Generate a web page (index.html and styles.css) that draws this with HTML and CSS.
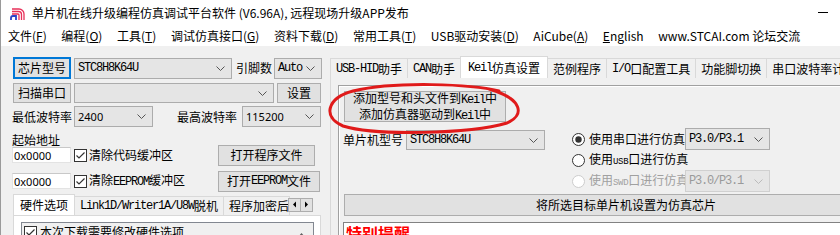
FILE: index.html
```html
<!DOCTYPE html>
<html>
<head>
<meta charset="utf-8">
<link rel="stylesheet" href="styles.css">
</head>
<body>
<div class="win">
  <div class="title">
    <svg class="logo" width="16" height="16" viewBox="0 0 16 16">
      <path d="M2 4 H9 A5 5 0 0 1 14 9 V15" fill="none" stroke="#e8305a" stroke-width="1.3"/>
      <path d="M2 6.5 H8.5 A3 3 0 0 1 11.5 9.5 V15" fill="none" stroke="#e8305a" stroke-width="1.3"/>
      <path d="M2 9 H8 A1 1 0 0 1 9 10 V15" fill="none" stroke="#e8305a" stroke-width="1.3"/>
      <path d="M1 15 V13 A2 2 0 0 1 3 11 H6 V15" fill="none" stroke="#2a44c8" stroke-width="1.8"/>
    </svg>
    <span class="ttl">单片机在线升级编程仿真调试平台软件 (V6.96A), 远程现场升级APP发布</span>
    <span class="min"></span>
  </div>
  <div class="menu">
    <span>文件(<u>F</u>)</span>
    <span>编程(<u>O</u>)</span>
    <span>工具(<u>T</u>)</span>
    <span>调试仿真接口(<u>G</u>)</span>
    <span>资料下载(<u>D</u>)</span>
    <span>常用工具(<u>T</u>)</span>
    <span>USB驱动安装(<u>D</u>)</span>
    <span>AiCube(<u>A</u>)</span>
    <span><u>E</u>nglish</span>
    <span>www.STCAI.com 论坛交流</span>
  </div>
  <div class="main">
    <div class="left">
      <div class="row r1">
        <div class="btn focus w58 h22">芯片型号</div>
        <div class="combo w158 h21 ml3"><span class="m">STC8H8K64U</span><svg class="arr" width="9" height="5" viewBox="0 0 9 5"><path d="M0.5 0.5 L4.5 4.5 L8.5 0.5" fill="none" stroke="#555" stroke-width="1"/></svg></div>
        <span class="lbl ml4">引脚数</span>
        <div class="combo w48 h21 ml2"><span class="m">Auto</span><svg class="arr" width="9" height="5" viewBox="0 0 9 5"><path d="M0.5 0.5 L4.5 4.5 L8.5 0.5" fill="none" stroke="#555" stroke-width="1"/></svg></div>
      </div>
      <div class="row r2">
        <div class="btn w58 h20">扫描串口</div>
        <div class="combo w200 h20 ml3"><svg class="arr" width="9" height="5" viewBox="0 0 9 5"><path d="M0.5 0.5 L4.5 4.5 L8.5 0.5" fill="none" stroke="#555" stroke-width="1"/></svg></div>
        <div class="btn w44 h20 ml3">设置</div>
      </div>
      <div class="row r3">
        <span class="lbl w62">最低波特率</span>
        <div class="combo w79 h21"><span class="s">2400</span><svg class="arr" width="9" height="5" viewBox="0 0 9 5"><path d="M0.5 0.5 L4.5 4.5 L8.5 0.5" fill="none" stroke="#555" stroke-width="1"/></svg></div>
        <span class="lbl ml24 w65">最高波特率</span>
        <div class="combo w79 h21"><span class="s">115200</span><svg class="arr" width="9" height="5" viewBox="0 0 9 5"><path d="M0.5 0.5 L4.5 4.5 L8.5 0.5" fill="none" stroke="#555" stroke-width="1"/></svg></div>
      </div>
      <div class="lbl r4">起始地址</div>
      <div class="row r5">
        <div class="field w59"><span class="s">0x0000</span></div>
        <span class="chk ml3"><svg width="13" height="13" viewBox="0 0 13 13"><rect x="0.5" y="0.5" width="12" height="12" fill="#fff" stroke="#333"/><path d="M2.5 6.5 L5 9 L10.5 3.5" fill="none" stroke="#333" stroke-width="1.2"/></svg></span>
        <span class="lbl ml2">清除代码缓冲区</span>
        <div class="btn w97 h21 pushr">打开程序文件</div>
      </div>
      <div class="row r6">
        <div class="field w59"><span class="s">0x0000</span></div>
        <span class="chk ml3"><svg width="13" height="13" viewBox="0 0 13 13"><rect x="0.5" y="0.5" width="12" height="12" fill="#fff" stroke="#333"/><path d="M2.5 6.5 L5 9 L10.5 3.5" fill="none" stroke="#333" stroke-width="1.2"/></svg></span>
        <span class="lbl ml2">清除<span class="m">EEPROM</span>缓冲区</span>
        <div class="btn w102 h21 pushr">打开<span class="m">EEPROM</span>文件</div>
      </div>
      <div class="ltabs">
        <div class="tab sel">硬件选项</div>
        <div class="tab"><span class="m">Link1D/Writer1A/U8W</span>脱机</div>
        <div class="tab clip">程序加密后</div>
        <div class="spin">
          <span class="sb"><svg width="5" height="7" viewBox="0 0 5 7"><path d="M4 0.5 L1 3.5 L4 6.5 Z" fill="#000"/></svg></span>
          <span class="sb"><svg width="5" height="7" viewBox="0 0 5 7"><path d="M1 0.5 L4 3.5 L1 6.5 Z" fill="#000"/></svg></span>
        </div>
      </div>
      <div class="lpanel">
        <div class="lbox">
          <span class="chk"><svg width="13" height="13" viewBox="0 0 13 13"><rect x="0.5" y="0.5" width="12" height="12" fill="#fff" stroke="#333"/><path d="M2.5 6.5 L5 9 L10.5 3.5" fill="none" stroke="#333" stroke-width="1.2"/></svg></span>
          <span class="lbl ml3">本次下载需要修改硬件选项</span>
          <span class="up"><svg width="9" height="6" viewBox="0 0 9 6"><path d="M0.5 5.5 L4.5 1 L8.5 5.5 Z" fill="#606060"/></svg></span>
        </div>
      </div>
    </div>
    <div class="right">
      <div class="rtabs">
        <div class="tab"><span class="m">USB-HID</span>助手</div>
        <div class="tab"><span class="m">CAN</span>助手</div>
        <div class="tab sel"><span class="m">Keil</span>仿真设置</div>
        <div class="tab">范例程序</div>
        <div class="tab"><span class="m">I/O</span>口配置工具</div>
        <div class="tab">功能脚切换</div>
        <div class="tab">串口波特率计算器</div>
      </div>
      <div class="rpanel">
        <div class="frame">
          <div class="btn kbtn"><span>添加型号和头文件到<span class="m">Keil</span>中</span><span>添加仿真器驱动到<span class="m">Keil</span>中</span></div>
          <div class="krow">
            <div class="kleft">
              <span class="lbl">单片机型号</span>
              <div class="combo w139 h20 ml3"><span class="m">STC8H8K64U</span><svg class="arr" width="9" height="5" viewBox="0 0 9 5"><path d="M0.5 0.5 L4.5 4.5 L8.5 0.5" fill="none" stroke="#555" stroke-width="1"/></svg></div>
            </div>
            <div class="radios">
              <div class="rrow">
                <span class="rad"><svg width="13" height="13" viewBox="0 0 13 13"><circle cx="6.5" cy="6.5" r="6" fill="#fff" stroke="#333"/><circle cx="6.5" cy="6.5" r="3.2" fill="#333"/></svg></span>
                <span class="lbl ml4 w96">使用串口进行仿真</span>
                <div class="combo w85 h22"><span class="m">P3.0/P3.1</span><svg class="arr" width="9" height="5" viewBox="0 0 9 5"><path d="M0.5 0.5 L4.5 4.5 L8.5 0.5" fill="none" stroke="#555" stroke-width="1"/></svg></div>
              </div>
              <div class="rrow h20">
                <span class="rad"><svg width="13" height="13" viewBox="0 0 13 13"><circle cx="6.5" cy="6.5" r="6" fill="#fff" stroke="#333"/></svg></span>
                <span class="lbl ml4">使用<span class="ms">USB</span>口进行仿真</span>
              </div>
              <div class="rrow dis">
                <span class="rad"><svg width="13" height="13" viewBox="0 0 13 13"><circle cx="6.5" cy="6.5" r="6" fill="#fff" stroke="#ccc"/></svg></span>
                <span class="lbl ml4 w96">使用<span class="ms">SWD</span>口进行仿真</span>
                <div class="combo dcombo w85 h22"><span class="m">P3.0/P3.1</span><svg class="arr" width="9" height="5" viewBox="0 0 9 5"><path d="M0.5 0.5 L4.5 4.5 L8.5 0.5" fill="none" stroke="#bbb" stroke-width="1"/></svg></div>
              </div>
            </div>
          </div>
          <div class="btn bigbtn">将所选目标单片机设置为仿真芯片</div>
          <div class="note"><span class="red">特别提醒</span></div>
        </div>
      </div>
    </div>
  </div>
  <svg class="ring" width="840" height="235" viewBox="0 0 840 235">
    <path d="M498 91 C470 84 395 81 352 91 C326 98 321 117 342 126 C375 136 468 134 506 123 C524 115 522 99 488 89" fill="none" stroke="#e01a1a" stroke-width="3" stroke-linecap="round"/>
  </svg>
</div>
</body>
</html>
```
FILE: styles.css
```css
html, body { margin: 0; padding: 0; }
body { width: 840px; height: 235px; overflow: hidden; background: #f0f0f0; font-family: "Noto Sans CJK SC", sans-serif; font-size: 12px; color: #000; }
.win { position: relative; width: 840px; height: 235px; overflow: hidden; border-left: 1px solid #9a9a9a; box-sizing: border-box; }
.title { height: 25px; background: #fff; display: flex; align-items: center; }
.logo { margin-left: 9px; }
.ttl { margin-left: 6px; line-height: 14px; }
.min { margin-left: auto; margin-right: 12px; width: 10px; height: 1px; background: #000; }
.menu { height: 21px; background: #fff; display: flex; align-items: center; gap: 14.6px; padding-left: 7px; line-height: 14px; }
.main { display: flex; height: 189px; }
.left { width: 327px; flex: none; padding: 11px 0 0 11px; box-sizing: border-box; }
.row { display: flex; align-items: center; }
.r2 { margin-top: 4px; }
.r3 { margin-top: 3px; }
.r4 { margin-top: 6px; height: 14px; line-height: 14px; }
.r5 { margin-top: -3px; height: 22px; }
.r6 { margin-top: 4px; height: 22px; }
.lbl { line-height: 14px; white-space: nowrap; }
.btn { box-sizing: border-box; background: #e1e1e1; border: 1px solid #adadad; display: flex; align-items: center; justify-content: center; line-height: 14px; white-space: nowrap; }
.focus { border: 2px solid #0078d7; }
.combo { box-sizing: border-box; background: #e5e5e5; border: 1px solid #acacac; display: flex; align-items: center; padding-left: 3px; line-height: 14px; white-space: nowrap; }
.arr { margin-left: auto; margin-right: 6px; flex: none; }
.field { box-sizing: border-box; height: 16px; background: #fff; border: 1px solid #e3e3e3; border-top-color: #c8c8c8; display: flex; align-items: center; padding-left: 1px; }
.chk, .rad { display: flex; flex: none; }
.m { font-family: "Liberation Mono", monospace; font-size: 12px; letter-spacing: -1.2px; }
.ms { font-family: "Liberation Mono", monospace; font-size: 9px; letter-spacing: -0.3px; }
.s { font-family: "Noto Sans", sans-serif; font-size: 11px; }
.pushr { margin-left: auto; }
.r5 .btn { margin-right: 13px; }
.r6 .btn { margin-right: 8px; }
.w44 { width: 44px; } .w48 { width: 48px; } .w58 { width: 58px; } .w59 { width: 59px; } .w62 { width: 62px; } .w65 { width: 65px; }
.w79 { width: 79px; } .w85 { width: 85px; } .w96 { width: 96px; } .w97 { width: 97px; } .w102 { width: 102px; } .w139 { width: 139px; } .w158 { width: 158px; } .w200 { width: 200px; }
.h20 { height: 20px; } .h21 { height: 21px; } .h22 { height: 22px; }
.ml2 { margin-left: 2px; } .ml3 { margin-left: 3px; } .ml4 { margin-left: 4px; } .ml24 { margin-left: 24px; }
.r1 .btn { margin-left: 1px; }
.r2 .btn:first-child { margin-left: 1px; }
.ltabs { display: flex; align-items: flex-end; height: 21px; margin-top: 2px; margin-left: 1px; position: relative; z-index: 1; }
.tab { box-sizing: border-box; height: 19px; padding: 0 5px; border: 1px solid #d9d9d9; border-bottom: none; margin-right: -1px; background: #f0f0f0; display: flex; align-items: center; line-height: 14px; white-space: nowrap; }
.tab.sel { height: 21px; background: #fff; padding: 0 6px; }
.tab.clip { width: 67px; overflow: hidden; }
.spin { display: flex; align-self: center; }
.sb { box-sizing: border-box; width: 13px; height: 14px; border: 1px solid #adadad; background: #e1e1e1; display: flex; align-items: center; justify-content: center; margin-left: -1px; }
.lpanel { margin-left: 1px; width: 308px; height: 30px; box-sizing: border-box; border: 1px solid #d9d9d9; background: #fff; padding: 6px 0 0 7px; }
.lbox { box-sizing: border-box; height: 30px; width: 293px; border: 1px solid #828790; background: #f0f0f0; display: flex; align-items: flex-start; padding: 3px 0 0 2px; }
.lbox .lbl { margin-top: -1px; }
.up { margin-left: auto; margin-right: 2px; width: 20px; display: flex; justify-content: center; padding-top: 6px; }
.right { flex: 1; padding-top: 10px; min-width: 0; }
.rtabs { display: flex; align-items: flex-end; height: 22px; margin-left: 2px; position: relative; z-index: 1; }
.rtabs .tab { height: 20px; }
.rtabs .tab.sel { height: 22px; padding: 0 7px; }
.rpanel { border-top: 1px solid #d9d9d9; border-left: 1px solid #d9d9d9; margin-left: 2px; margin-top: -1px; height: 160px; padding: 7px 0 0 7px; }
.frame { border-top: 1px solid #a0a0a0; border-left: 1px solid #a0a0a0; height: 160px; padding: 5px 0 0 5px; box-shadow: inset 1px 1px 0 #fff; }
.kbtn { width: 162px; height: 31px; flex-direction: column; line-height: 13px; }
.krow { display: flex; margin-top: 8px; }
.kleft { display: flex; align-items: center; height: 20px; width: 229px; margin-left: -1px; }
.radios { display: flex; flex-direction: column; margin-top: -2px; }
.rrow { display: flex; align-items: center; height: 22px; }
.rrow.h20 { height: 20px; }
.dis .lbl { color: #a0a0a0; }
.dcombo { background: #e6e6e6; border-color: #d0d0d0; color: #9a9a9a; }
.bigbtn { width: 564px; height: 22px; margin-top: 2px; }
.note { margin-top: 6px; border-top: 1px solid #828282; border-left: 1px solid #828282; background: #fff; height: 20px; padding-left: 2px; margin-left: -1px; }
.red { color: #ff0000; font-weight: bold; font-size: 16px; line-height: 20px; }
.ring { position: absolute; left: 0; top: 0; pointer-events: none; }
```
